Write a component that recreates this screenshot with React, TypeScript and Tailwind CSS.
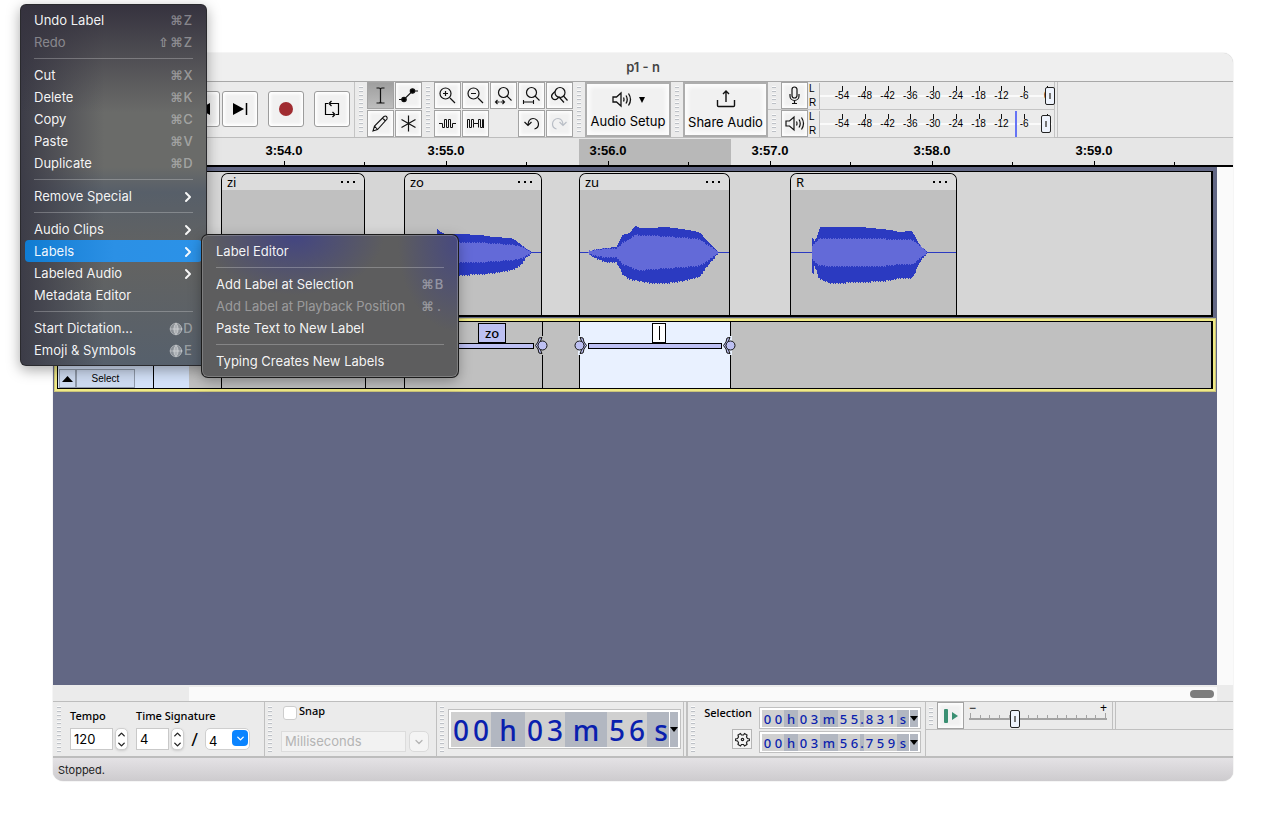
import React from "react";
import { ChevronDown, ChevronRight, ChevronUp, Globe } from "lucide-react";

interface MenuEntry {
  label?: string;
  shortcut?: string[];
  globe?: boolean;
  arrow?: boolean;
  disabled?: boolean;
  active?: boolean;
}

const EDIT_MENU: MenuEntry[] = [
  { label: "Undo Label", shortcut: ["⌘", "Z"] },
  { label: "Redo", shortcut: ["⇧", "⌘", "Z"], disabled: true },
  {},
  { label: "Cut", shortcut: ["⌘", "X"] },
  { label: "Delete", shortcut: ["⌘", "K"] },
  { label: "Copy", shortcut: ["⌘", "C"] },
  { label: "Paste", shortcut: ["⌘", "V"] },
  { label: "Duplicate", shortcut: ["⌘", "D"] },
  {},
  { label: "Remove Special", arrow: true },
  {},
  { label: "Audio Clips", arrow: true },
  { label: "Labels", arrow: true, active: true },
  { label: "Labeled Audio", arrow: true },
  { label: "Metadata Editor" },
  {},
  { label: "Start Dictation...", globe: true, shortcut: ["D"] },
  { label: "Emoji & Symbols", globe: true, shortcut: ["E"] },
];

const LABELS_MENU: MenuEntry[] = [
  { label: "Label Editor" },
  {},
  { label: "Add Label at Selection", shortcut: ["⌘", "B"] },
  { label: "Add Label at Playback Position", shortcut: ["⌘", "."], disabled: true },
  { label: "Paste Text to New Label" },
  {},
  { label: "Typing Creates New Labels" },
];

function MenuItems({ items }: { items: MenuEntry[] }) {
  return (
    <>
      {items.map((item, i) =>
        item.label ? (
          <button
            key={i}
            type="button"
            role="menuitem"
            disabled={item.disabled}
            className={`flex h-[22px] w-full items-center justify-between rounded-[4px] px-[9px] pt-[2px] text-left font-[Inter,sans-serif] text-[13px] ${
              item.disabled ? "text-white/40" : "text-white/95"
            } ${item.active ? "bg-gradient-to-r from-[#0f7cd2] via-[#2b90e5] to-[#2b92e8]" : ""}`}
          >
            <span className="whitespace-nowrap">{item.label}</span>
            {item.arrow && <ChevronRight className="-mr-[3px] h-[16px] w-[16px]" strokeWidth={3} />}
            {item.shortcut && (
              <span className="flex items-center font-medium text-white/40">
                {item.globe && (
                  <span className="flex h-[14px] w-[14px] items-center justify-center">
                    <Globe className="h-[14px] w-[14px] fill-white/30" strokeWidth={1.5} />
                  </span>
                )}
                {item.shortcut.map((key, k) => (
                  <span
                    key={k}
                    className={
                      key === "⌘" || key === "⇧"
                        ? "w-[13px] text-center font-['DejaVu_Sans',sans-serif] text-[13px] font-bold leading-4"
                        : "w-[10px] text-center"
                    }
                  >
                    {key}
                  </span>
                ))}
              </span>
            )}
          </button>
        ) : (
          <div key={i} role="separator" className="mx-[9px] flex h-[11px] items-center">
            <div className="h-px w-full bg-white/25" />
          </div>
        )
      )}
    </>
  );
}

/* ---------- waveforms ---------- */

// x, peak above, peak below, rms above, rms below
type Peak = [number, number, number, number, number];

const WAVE_ZO: Peak[] = [
  [32, 0, 0, 0, 0], [33, 23, 20, 8, 8], [36, 20, 20, 9, 9], [40, 18, 22, 9, 9], [55, 18, 22, 9, 9],
  [76, 17, 21, 9, 9], [88, 15, 20, 8, 8], [106, 14, 17, 7, 7], [112, 11, 15, 6, 6], [117, 7, 11, 5, 5],
  [121, 4, 5, 3, 3], [126, 1, 1, 0, 0],
];
const WAVE_ZU: Peak[] = [
  [9, 0, 0, 0, 0], [11, 1, 2, 1, 1], [19, 3, 6, 2, 3], [27, 4, 9, 3, 4], [37, 5, 9, 3, 4],
  [41, 13, 16, 6, 8], [43, 17, 21, 9, 11], [50, 19, 26, 12, 13], [56, 26, 27, 17, 16], [61, 24, 28, 16, 17],
  [72, 24, 30, 16, 16], [86, 25, 30, 15, 15], [102, 23, 28, 14, 14], [115, 21, 25, 13, 13],
  [121, 19, 23, 12, 12], [126, 13, 15, 8, 9], [133, 6, 7, 4, 4], [138, 1, 1, 0, 0],
];
const WAVE_R: Peak[] = [
  [22, 14, 20, 6, 6], [23, 13, 20, 7, 7], [24, 11, 13, 8, 8], [26, 14, 17, 10, 10], [28, 20, 24, 12, 12],
  [30, 25, 26, 13, 12], [40, 25, 30, 13, 13], [70, 25, 29, 13, 13], [90, 23, 28, 13, 13], [101, 22, 27, 12, 12],
  [108, 20, 25, 12, 11], [121, 21, 25, 12, 11], [124, 17, 21, 10, 10], [128, 9, 11, 7, 6],
  [132, 4, 5, 4, 3], [136, 1, 1, 0, 0],
];

function sample(points: Peak[], x: number, col: number) {
  const next = points.findIndex((p) => p[0] >= x);
  if (next <= 0) return points[0][col];
  const a = points[next - 1];
  const b = points[next];
  return a[col] + ((b[col] - a[col]) * (x - a[0])) / (b[0] - a[0]);
}

// one bar per pixel column, with a ragged edge
function columns(points: Peak[], up: number, down: number) {
  let d = "";
  for (let x = points[0][0]; x <= points[points.length - 1][0]; x++) {
    const ragged = (x * 7) % 5 < 2 ? 1 : 0;
    const top = Math.round(sample(points, x, up)) + (up === 3 ? ragged : 0);
    const bottom = Math.round(sample(points, x, down)) + ragged;
    d += `M${x - 1} ${62 - top}h1v${top + bottom + 1}h-1z`;
  }
  return d;
}

function Clip({ name, size, wave }: { name: string; size: string; wave?: Peak[] }) {
  return (
    <div className={`flex flex-col overflow-hidden rounded-t-[7px] border-x border-t border-black bg-[#c0c0c0] ${size}`}>
      <div className="flex h-4 items-center justify-between bg-[#dcdcdc] px-[5px] font-['Noto_Sans',sans-serif] text-[13px] leading-4 text-black">
        <span>{name}</span>
        <button type="button" aria-label="Clip options" className="mr-[4px] flex gap-[4px]">
          <i className="h-[2px] w-[2px] bg-black" />
          <i className="h-[2px] w-[2px] bg-black" />
          <i className="h-[2px] w-[2px] bg-black" />
        </button>
      </div>
      <svg className="h-[125px] w-full" shapeRendering="crispEdges" aria-hidden="true">
        {wave && (
          <>
            <rect x="0" y="62" width="100%" height="1" fill="#2b3ac1" />
            <path d={columns(wave, 1, 2)} fill="#2b3ac1" />
            <path d={columns(wave, 3, 4)} fill="#636ad8" />
          </>
        )}
      </svg>
    </div>
  );
}

function LabelHandle({ flip, bg }: { flip?: boolean; bg: string }) {
  return (
    <svg width="13" height="19" viewBox="0 0 13 19" className={`shrink-0 ${flip ? "-scale-x-100" : ""}`}>
      <rect x="4" width="3" height="19" fill={bg} />
      <path d="M6 1.500 9 2l1 4 2.500 3.500L10 13l-1 4-3 .5 1.500-3.500 2.500-4.500-2.500-4.500z" fill="#bdc0f2" stroke="#111" strokeWidth="1" />
      <circle cx="5.500" cy="9.500" r="4.500" fill="#bdc0f2" stroke="#111" strokeWidth="1" />
    </svg>
  );
}

function Label({ text, size, editing }: { text?: string; size: string; editing?: boolean }) {
  const bg = editing ? "#e9f1ff" : "#c0c0c0";
  return (
    <div className={`flex flex-col border-x border-black ${editing ? "bg-[#e9f1ff]" : ""} ${size}`}>
      {editing ? (
        <input
          aria-label="Label text"
          className="ml-[72px] mt-px h-5 w-[14px] border border-black bg-white bg-[linear-gradient(#000,#000)] bg-[length:1px_14px] bg-center bg-no-repeat outline-none"
        />
      ) : (
        <span className="ml-[73px] mt-px h-5 self-start border border-black bg-[#bdc0f2] px-[6px] font-['Noto_Sans',sans-serif] text-[13px] font-medium leading-[18px] text-black">
          {text}
        </span>
      )}
      <div className="-mx-[6px] -mt-[7px] flex items-center">
        <LabelHandle bg={bg} />
        <div className="mx-px h-[6px] flex-1 border border-black bg-[#bdc0f2]" />
        <LabelHandle flip bg={bg} />
      </div>
    </div>
  );
}

/* ---------- toolbars ---------- */

function Grip({ size = "h-[47px]" }: { size?: string }) {
  return (
    <div
      className={`w-[4px] shrink-0 bg-[repeating-linear-gradient(to_bottom,#fafafa_0px,#fafafa_1px,#bcc0c6_1px,#bcc0c6_2px,#ebebeb_2px,#ebebeb_4px)] ${size}`}
    />
  );
}

function ToolButton({ label, active, children }: { label: string; active?: boolean; children: React.ReactNode }) {
  return (
    <button
      type="button"
      aria-label={label}
      className={`flex h-[27px] w-[27px] items-center justify-center border border-[#a3a3a3] ${
        active
          ? "bg-gradient-to-b from-[#9f9f9f] to-[#bdbdbd]"
          : "bg-[#f1f1f1] shadow-[inset_0_0_3px_2px_#fdfdfd]"
      }`}
    >
      <svg width="21" height="21" viewBox="0 0 21 21" fill="none" stroke="#111" strokeWidth="1.200">
        {children}
      </svg>
    </button>
  );
}

function TransportButton({ label, children }: { label: string; children: React.ReactNode }) {
  return (
    <button
      type="button"
      aria-label={label}
      className="flex h-[36px] w-[36px] shrink-0 items-center justify-center rounded-[3px] border border-[#9c9c9c] bg-[#f1f1f1] shadow-[inset_0_0_3px_2px_#ffffff]"
    >
      <svg width="24" height="24" viewBox="0 0 24 24" fill="none" stroke="#000" strokeWidth="1.500">
        {children}
      </svg>
    </button>
  );
}

const SPEAKER = (
  <>
    <path d="M2 8h3.500L10 4v13l-4.500-4H2z" />
    <path d="M12.500 8.500q1 2 0 4M15 6.500q2.500 4 0 8M17.500 4.500q4 6 0 12" />
  </>
);

const METER_MARKS = ["-54", "-48", "-42", "-36", "-30", "-24", "-18", "-12", "-6", "0"];

const THUMB =
  "[&::-webkit-slider-thumb]:h-[18px] [&::-webkit-slider-thumb]:w-[10px] [&::-webkit-slider-thumb]:appearance-none [&::-webkit-slider-thumb]:rounded-[2px] [&::-webkit-slider-thumb]:border-[1px] [&::-webkit-slider-thumb]:border-[#222] [&::-webkit-slider-thumb]:bg-[linear-gradient(#777,#777)] [&::-webkit-slider-thumb]:bg-[length:2px_6px] [&::-webkit-slider-thumb]:bg-center [&::-webkit-slider-thumb]:bg-no-repeat [&::-webkit-slider-thumb]:bg-[#eef3fc]";

function Meter({ name, value, peak, icon }: { name: string; value: number; peak?: boolean; icon: React.ReactNode }) {
  return (
    <div className="flex h-[28px] items-center border-b border-[#c4c4c4]">
      <div className="ml-[4px] mr-[5px]">
        <Grip size="h-[19px]" />
      </div>
      <ToolButton label={name}>{icon}</ToolButton>
      <div className="ml-px mr-[2px] w-[8px] font-['Liberation_Sans',sans-serif] text-[10px] leading-[14px] text-black">
        <div>L</div>
        <div>R</div>
      </div>
      <div className="relative h-[26px] w-[233px] border-l border-[#bbb] bg-[linear-gradient(#ebebeb_0px,#ebebeb_12px,#fafafa_12px,#fafafa_14px,#ebebeb_14px)]">
        <div className="ml-[11px] flex w-[227px] justify-between">
          {METER_MARKS.map((mark) => (
            <div
              key={mark}
              className="w-[22px] shrink-0 bg-[linear-gradient(#111,#111)] bg-[length:1px_5px] bg-[position:11px_3px] bg-no-repeat text-center font-['Liberation_Sans',sans-serif] text-[10px] leading-[25px] text-black"
            >
              {mark}
            </div>
          ))}
        </div>
        {peak && <div className="absolute left-[195px] top-0 h-[26px] w-[2px] bg-[#6674f5]" />}
        <input
          type="range"
          aria-label={`${name} level`}
          defaultValue={value}
          className={`absolute inset-0 h-full w-[235px] appearance-none bg-transparent ${THUMB}`}
        />
      </div>
    </div>
  );
}

interface Cell {
  text: string;
  size: string;
}

const BIG_TIME: Cell[] = [
  { text: "00", size: "w-[40px]" },
  { text: "h", size: "w-[34px]" },
  { text: "03", size: "w-[40px]" },
  { text: "m", size: "w-[42px]" },
  { text: "56", size: "w-[40px]" },
  { text: "s", size: "w-[22px] pl-[6px]" },
];

function smallTime(seconds: string, millis: string): Cell[] {
  return [
    { text: "00", size: "w-[22px]" },
    { text: "h", size: "w-[14px]" },
    { text: "03", size: "w-[22px]" },
    { text: "m", size: "w-[18px]" },
    { text: seconds, size: "w-[22px]" },
    { text: ".", size: "w-[4px]" },
    { text: millis, size: "w-[33px]" },
    { text: "s", size: "w-[12px]" },
  ];
}

function TimeField({ label, cells, big }: { label: string; cells: Cell[]; big?: boolean }) {
  return (
    <div
      role="group"
      aria-label={label}
      className={`flex border-2 border-b-[1px] border-white bg-[#b2b7c1] font-['Noto_Sans',sans-serif] text-[#0a1fae] outline outline-1 outline-[#c0c0c0] ${
        big ? "h-[38px] text-[28px] leading-[37px]" : "h-5 text-[13px] leading-[18px]"
      }`}
    >
      {cells.map((cell, i) => (
        <div key={i} className={`flex ${cell.size} ${/\d/.test(cell.text) ? "bg-[#d0d0d0]" : ""}`}>
          {cell.text.split("").map((ch, k) => (
            <span key={k} className="flex flex-1 justify-center">
              {ch}
            </span>
          ))}
        </div>
      ))}
      <button type="button" aria-label={`${label} format`} className="flex w-[9px] items-center justify-center border-l border-white">
        <svg width="8" height="5" viewBox="0 0 8 5">
          <path d="M0 0h8L4 5z" fill="#000" />
        </svg>
      </button>
    </div>
  );
}

function Stepper() {
  return (
    <span className="ml-[2px] flex h-[22px] w-[13px] flex-col items-center justify-between rounded-[5px] border border-[#cfcfcf] bg-white text-[#222] shadow-sm">
      <button type="button" aria-label="Increase" className="flex h-[10px] items-center">
        <ChevronUp className="h-[11px] w-[11px]" strokeWidth={3} />
      </button>
      <span className="h-px w-full bg-[#d5d5d5]" />
      <button type="button" aria-label="Decrease" className="flex h-[10px] items-center">
        <ChevronDown className="h-[11px] w-[11px]" strokeWidth={3} />
      </button>
    </span>
  );
}

const LENS = <path d="m13 13 5 5M14 8.500a5.500 5.500 0 1 1-11 0 5.500 5.500 0 0 1 11 0z" />;

function Toolbar() {
  return (
    <div className="flex h-[56px] shrink-0 border-b border-[#bdbdbd] bg-[#ebebeb]">
      {/* Transport */}
      <div className="flex w-[302px] shrink-0 items-start justify-end border-r border-[#c4c4c4] pr-[4px] pt-[9px]">
        <TransportButton label="Skip to start">
          <path d="M5 6v12" />
          <path d="M20 6v12L9 12z" fill="#000" stroke="none" />
        </TransportButton>
        <div className="ml-[2px] mr-[10px]">
          <TransportButton label="Skip to end">
            <path d="M18.500 6v12" />
            <path d="M5 6v12l11-6z" fill="#000" stroke="none" />
          </TransportButton>
        </div>
        <TransportButton label="Record">
          <circle cx="12" cy="12" r="7" fill="#a02c31" stroke="none" />
        </TransportButton>
        <div className="ml-[10px]">
          <TransportButton label="Loop">
            <path d="M8 6.500H5.500v11H14M16 17.500h2.500v-11H10M11.500 4 9 6.500 11.500 9M12.500 15l2.500 2.500-2.500 2.500" strokeWidth="1.200" />
          </TransportButton>
        </div>
      </div>

      <div className="mx-[4px] self-center">
        <Grip />
      </div>

      {/* Tools */}
      <div className="grid grid-cols-2 gap-px self-start">
        <ToolButton label="Selection tool" active>
          <path d="M6.500 3H9q1.500 0 1.500 1.500v12Q10.500 18 9 18H6.500M14.500 3H12q-1.500 0-1.500 1.500M14.500 18H12q-1.500 0-1.500-1.500" />
        </ToolButton>
        <ToolButton label="Envelope tool">
          <path d="M1 14.500h5L14.500 6H20" />
          <circle cx="6" cy="14.500" r="2.200" fill="#000" />
          <circle cx="14.500" cy="6" r="2.200" fill="#000" />
        </ToolButton>
        <ToolButton label="Draw tool">
          <path d="m3 18 1.500-5L14 3.500q1.500-1 2.500 0t.5 2.500L7.500 16.500zM12.500 5l3 3M4.500 13l3 3.500" strokeWidth="1.100" />
        </ToolButton>
        <ToolButton label="Multi tool">
          <path d="M10.500 2.500v16M3.500 6.500l14 8M17.500 6.500l-14 8" />
        </ToolButton>
      </div>

      <div className="mx-[4px] self-center">
        <Grip />
      </div>

      {/* Zoom and edit */}
      <div className="grid grid-cols-5 gap-px self-start">
        <ToolButton label="Zoom in">
          {LENS}
          <path d="M8.500 6v5M6 8.500h5" />
        </ToolButton>
        <ToolButton label="Zoom out">
          {LENS}
          <path d="M6 8.500h5" />
        </ToolButton>
        <ToolButton label="Fit selection">
          <circle cx="10.500" cy="7.500" r="5" />
          <path d="m14 11 4.500 4.500M2.500 17h4M7.500 17h4M4.500 15l-2 2 2 2M9.500 15l2 2-2 2" strokeWidth="1.100" />
        </ToolButton>
        <ToolButton label="Fit project">
          <circle cx="10.500" cy="7.500" r="5" />
          <path d="m14 11 4.500 4.500M2.500 17h10M2.500 15v4M12.500 15v4" strokeWidth="1.100" />
        </ToolButton>
        <ToolButton label="Zoom toggle">
          <circle cx="11" cy="7.500" r="5" />
          <path d="m14.500 11 4 4.500M6 6.500 3.500 9a3.500 3.500 0 0 0 0 4.500 3.500 3.500 0 0 0 5 0l2-2M10.500 12.500l4.500 5" />
        </ToolButton>
        <ToolButton label="Trim audio">
          <path d="M2 10.500h3.500v4h2v-8h2v8h2v-8h2v8h2v-4H19" strokeWidth="1" />
        </ToolButton>
        <ToolButton label="Silence audio">
          <path d="M2.500 15V6.500h2v8h2v-8h2v4h5v-4h2v8h2v-8h1V15M13.500 10.500v4M8.500 10.500v4" strokeWidth="1" />
        </ToolButton>
        <span />
        <ToolButton label="Undo">
          <path d="M3.500 9l3.500 3.500L10.500 9M7 12c0-4 2-6.500 5-6.500s5.500 2.500 5.500 5.500c0 2.500-2 4.500-4 5" />
        </ToolButton>
        <ToolButton label="Redo">
          <path d="M17.500 9 14 12.500 10.500 9M14 12c0-4-2-6.500-5-6.500S3.500 8 3.500 11c0 2.500 2 4.500 4 5" stroke="#b9bec6" />
        </ToolButton>
      </div>

      <div className="mx-[4px] self-center">
        <Grip />
      </div>

      <button
        type="button"
        className="flex h-[55px] w-[86px] shrink-0 flex-col items-center border-2 border-[#adadad] bg-[#f1f1f1] pt-[5px] font-[Inter,sans-serif] text-[13px] leading-[20px] text-black shadow-[inset_0_0_4px_3px_#fdfdfd]"
      >
        <span className="flex items-center gap-[6px]">
          <svg width="22" height="22" viewBox="0 0 22 22" fill="none" stroke="#111" strokeWidth="1.300">
            {SPEAKER}
          </svg>
          <svg width="6" height="6" viewBox="0 0 6 6">
            <path d="M0 0h6L3 6z" fill="#000" />
          </svg>
        </span>
        <span className="whitespace-nowrap">Audio Setup</span>
      </button>

      <div className="mx-[4px] self-center">
        <Grip />
      </div>

      <button
        type="button"
        className="flex h-[55px] w-[85px] shrink-0 flex-col items-center border-2 border-[#adadad] bg-[#f1f1f1] pt-[5px] font-[Inter,sans-serif] text-[13px] leading-[20px] text-black shadow-[inset_0_0_4px_3px_#fdfdfd]"
      >
        <svg width="22" height="22" viewBox="0 0 22 22" fill="none" stroke="#111" strokeWidth="1.400">
          <path d="M2.500 11v5.500q0 1 1 1h15q1 0 1-1V11M11 13V2M8 5l3-3 3 3" />
        </svg>
        <span className="mt-px whitespace-nowrap">Share Audio</span>
      </button>

      {/* Meters */}
      <div className="w-[287px] shrink-0 border-r border-[#c4c4c4]">
        <Meter
          name="Recording"
          value={100}
          icon={<path d="M8 4.500a2.500 2.500 0 0 1 5 0v6a2.500 2.500 0 0 1-5 0zM6 9v2a4.500 4.500 0 0 0 9 0V9M10.500 15.500V18M8 18.500h5" />}
        />
        <Meter name="Playback" value={98} peak icon={SPEAKER} />
      </div>
      <div className="w-[3px] shrink-0 border-r border-[#c4c4c4]" />
    </div>
  );
}

function Ruler() {
  const seconds = ["3:54.0", "3:55.0", "3:56.0", "3:57.0", "3:58.0", "3:59.0"];
  return (
    <div className="relative flex h-[29px] shrink-0 overflow-hidden border-b-2 border-black bg-[#e6e6e6] pl-[150px]">
      <div className="absolute bottom-0 left-[526px] top-px w-[152px] bg-[#b8b8b8]" />
      {seconds.map((s) => (
        <div key={s} className="relative flex w-[162px] shrink-0 flex-col items-center justify-between">
          <span className="mt-[2px] font-['Liberation_Sans',sans-serif] text-[13px] font-bold leading-[21px] text-black">{s}</span>
          <div className="flex w-full items-end">
            <div className="flex-1" />
            <div className="h-[4px] w-px bg-black" />
            <div className="flex flex-1 items-end justify-end">
              <div className="h-[3px] w-px bg-black" />
            </div>
          </div>
        </div>
      ))}
    </div>
  );
}

function Tracks() {
  return (
    <div className="min-w-0 flex-1 bg-[#626784] pt-[4px]">
      {/* Audio track */}
      <div className="mx-[4px] flex h-[146px] border-b-2 border-l border-r-2 border-t border-black bg-[#d6d6d6]">
        <div className="w-[131px] shrink-0 bg-[#d3e1f8]" />
        <div className="flex pt-px">
          <Clip name="zi" size="ml-[32px] w-[144px]" />
          <Clip name="zo" size="ml-[39px] w-[138px]" wave={WAVE_ZO} />
          <Clip name="zu" size="ml-[37px] w-[151px]" wave={WAVE_ZU} />
          <Clip name="R" size="ml-[60px] w-[167px]" wave={WAVE_R} />
        </div>
      </div>

      {/* Label track */}
      <div className="mx-px mt-px border-[3px] border-[#f0ea86] outline outline-1 -outline-offset-1 outline-[#c9c37a]">
        <div className="flex h-[68px] border border-r-2 border-black bg-[#c0c0c0]">
          <div className="flex w-[131px] shrink-0 bg-[#d3e1f8]">
            <div className="flex flex-1 items-end border-r border-black pl-px">
              <button
                type="button"
                aria-label="Collapse track"
                className="flex h-[19px] w-[17px] items-center justify-center border border-[#8e98a8] bg-[#ccd9ef]"
              >
                <svg width="11" height="6" viewBox="0 0 11 6">
                  <path d="M5.500 0 11 6H0z" fill="#000" />
                </svg>
              </button>
              <button
                type="button"
                className="h-[19px] w-[59px] border border-[#8e98a8] bg-[#ccd9ef] font-['Liberation_Sans',sans-serif] text-[10px] leading-4 text-black"
              >
                Select
              </button>
            </div>
            <div className="w-[35px]" />
          </div>
          <div className="flex">
            <Label size="ml-[32px] w-[145px]" />
            <Label text="zo" size="ml-[38px] w-[139px]" />
            <Label size="ml-[36px] w-[152px]" editing />
          </div>
        </div>
      </div>
    </div>
  );
}

function BottomBar() {
  return (
    <div className="flex h-[57px] shrink-0 border-b-2 border-t border-[#bdbdbd] bg-[#ebebeb] font-['Noto_Sans',sans-serif] text-[11px] font-medium text-black">
      {/* Time signature */}
      <div className="flex w-[212px] shrink-0 border-r border-[#c0c0c0] pl-[4px] pt-[4px]">
        <Grip />
        <div className="ml-[9px] w-[66px]">
          <label htmlFor="tempo" className="block h-[22px] leading-[20px]">
            Tempo
          </label>
          <div className="flex">
            <input
              id="tempo"
              defaultValue="120"
              className="h-[22px] w-[43px] border border-[#c9c9c9] bg-white px-[3px] font-[Inter,sans-serif] text-[13px] font-normal"
            />
            <Stepper />
          </div>
        </div>
        <div>
          <label htmlFor="upper" className="block h-[22px] whitespace-nowrap leading-[20px]">
            Time Signature
          </label>
          <div className="flex">
            <input
              id="upper"
              defaultValue="4"
              className="h-[22px] w-[33px] border border-[#c9c9c9] bg-white px-[3px] font-[Inter,sans-serif] text-[13px] font-normal"
            />
            <Stepper />
            <span className="w-[21px] text-center text-[18px] font-normal leading-[22px]">/</span>
            <span className="relative">
              <select
                aria-label="Lower time signature"
                className="h-[22px] w-[45px] appearance-none rounded-[5px] border border-[#cfcfcf] bg-white px-[3px] pt-[3px] font-[Inter,sans-serif] text-[13px] font-normal leading-[16px]"
              >
                <option>4</option>
              </select>
              <span className="pointer-events-none absolute right-[2px] top-[2px] flex h-4 w-4 items-center justify-center rounded-[4px] bg-[#0a84ff] text-white">
                <ChevronDown className="h-[11px] w-[11px]" strokeWidth={3} />
              </span>
            </span>
          </div>
        </div>
      </div>

      {/* Snapping */}
      <div className="flex w-[172px] shrink-0 border-r border-[#c0c0c0] pl-[3px] pt-[4px]">
        <Grip />
        <div className="ml-[9px]">
          <label className="flex h-[12px] items-start gap-[2px] pl-[2px] leading-[10px]">
            <input type="checkbox" className="h-[14px] w-[14px] shrink-0 appearance-none rounded-[3px] border border-[#cdcdcd] bg-white" />
            Snap
          </label>
          <div className="mt-[13px] flex items-center">
            <select
              disabled
              aria-label="Snap to"
              className="h-[21px] w-[125px] appearance-none border border-[#dcdcdc] bg-[#f2f2f2] px-[3px] font-[Inter,sans-serif] text-[13px] font-normal text-[#b4b4b4] opacity-100"
            >
              <option>Milliseconds</option>
            </select>
            <button
              type="button"
              disabled
              aria-label="Snap options"
              className="ml-[3px] flex h-[21px] w-[20px] items-center justify-center rounded-[5px] border border-[#dadada] bg-[#f4f4f4] text-[#b4b4b4]"
            >
              <ChevronDown className="h-[12px] w-[12px]" strokeWidth={2.5} />
            </button>
          </div>
        </div>
      </div>

      {/* Time */}
      <div className="flex w-[247px] shrink-0 border-r border-[#c0c0c0] pl-[3px] pt-[4px]">
        <Grip />
        <div className="ml-[5px] pt-[4px]">
          <TimeField label="Audio position" cells={BIG_TIME} big />
        </div>
      </div>
      <div className="w-[4px] shrink-0 border-r-2 border-[#c0c0c0]" />

      {/* Selection */}
      <div className="flex w-[238px] shrink-0 border-r border-[#c0c0c0] pl-[3px] pt-[4px]">
        <Grip />
        <div className="ml-[9px] flex w-[48px] flex-col items-end">
          <span className="h-[23px] leading-[13px]">Selection</span>
          <button
            type="button"
            aria-label="Selection settings"
            className="flex h-5 w-5 items-center justify-center border border-[#b5b5b5] bg-[#f4f4f4]"
          >
            <svg width="15" height="15" viewBox="0 0 15 15" fill="none" stroke="#222" strokeWidth="1.200">
              <path d="M5.500 1.500 6.500 3h2l1-1.500 2.500 1.500-.5 2 1 1.500 2 .5v1.500l-2 .5-1 1.500.5 2-2.500 1.500-1-1.500h-2l-1 1.500L3 12.500l.5-2-1-1.500-2-.5V7l2-.5 1-1.500-.5-2z" />
              <circle cx="7.500" cy="7.500" r="1.200" />
            </svg>
          </button>
        </div>
        <div className="ml-[8px] flex flex-col gap-[4px] pt-[2px]">
          <TimeField label="Selection start" cells={smallTime("55", "831")} />
          <TimeField label="Selection end" cells={smallTime("56", "759")} />
        </div>
      </div>

      {/* Play at speed */}
      <div className="min-w-0 flex-1">
        <div className="flex h-[28px] border-b border-[#c0c0c0]">
          <div className="ml-[3px] mr-[4px] pt-[5px]">
            <Grip size="h-[19px]" />
          </div>
          <button
            type="button"
            aria-label="Play at speed"
            className="flex h-[27px] w-[27px] shrink-0 items-center justify-center border border-[#a3a3a3] bg-[#f1f1f1] shadow-[inset_0_0_3px_2px_#fdfdfd]"
          >
            <svg width="16" height="14" viewBox="0 0 16 14" fill="#3a8f72">
              <rect x="1" width="4" height="14" rx="1" />
              <path d="M9 3v8l6-4z" />
            </svg>
          </button>
          <div className="relative ml-[5px] w-[140px] shrink-0">
            <div className="flex justify-between pr-[2px] font-['Liberation_Sans',sans-serif] text-[12px] leading-[13px]">
              <span>−</span>
              <span>+</span>
            </div>
            <div className="mr-[2px] flex h-[5px] items-end justify-between border-b-2 border-[#a3a3a3] px-px">
              {Array.from({ length: 15 }, (_, i) => (
                <i key={i} className={`w-px bg-[#a3a3a3] ${i === 0 || i === 14 ? "h-[5px]" : "h-[3px]"}`} />
              ))}
            </div>
            <input
              type="range"
              aria-label="Playback speed"
              defaultValue={32}
              className={`absolute left-0 top-[8px] h-[18px] w-[139px] appearance-none bg-transparent ${THUMB}`}
            />
          </div>
          <div className="w-[4px] shrink-0 border-r border-[#c0c0c0]" />
          <div className="w-[3px] shrink-0 border-r border-[#c0c0c0]" />
        </div>
      </div>
    </div>
  );
}

export default function App() {
  return (
    <main className="relative flex min-h-screen flex-col bg-white pb-[32px] pl-[53px] pr-[35px] pt-[53px]">
      <div className="flex flex-1 flex-col overflow-hidden rounded-[10px] bg-[#ebebeb] shadow-[0_0_1px_#999]">
        <h1 className="h-[29px] shrink-0 border-b border-[#a8a8a8] bg-[#efefef] text-center font-[Inter,sans-serif] text-[13px] font-semibold leading-[28px] text-[#444]">
          p1 - n
        </h1>
        <Toolbar />
        <Ruler />
        <div className="flex flex-1">
          <Tracks />
          <div className="w-4 shrink-0 bg-[#fafafa]" />
        </div>
        <div className="flex h-4 shrink-0 pr-4 pt-[2px]">
          <div className="w-[136px] shrink-0" />
          <div className="flex flex-1 items-center justify-end bg-[#fafafa] pr-[3px]">
            <div className="h-[8px] w-[24px] rounded-full bg-[#7d7d7d]" />
          </div>
        </div>
        <BottomBar />
        <footer className="h-[23px] shrink-0 bg-gradient-to-b from-[#e4e2e5] to-[#cdcbce] px-[5px] font-[Inter,sans-serif] text-[11px] leading-[24px] text-[#222]">
          Stopped.
        </footer>
      </div>

      {/* Edit menu */}
      <div
        role="menu"
        aria-label="Edit"
        className="absolute left-[20px] top-[4px] w-[187px] rounded-[6px] bg-[#5c5d60] bg-[linear-gradient(to_bottom,#35323e_0%,#35323e99_12%,transparent_30%),linear-gradient(to_right,#3c3c47_0%,transparent_45%),linear-gradient(to_bottom,#6a6b69_45%,#575f69_52%,#636361_70%,#56606c_100%)] p-[5px] shadow-[0_4px_14px_rgba(0,0,0,0.35),inset_0_0_0_1px_#2a2a2e]"
      >
        <MenuItems items={EDIT_MENU} />
      </div>
      <div
        role="menu"
        aria-label="Labels"
        className="absolute left-[202px] top-[235px] w-[256px] rounded-[6px] bg-[#5d5d5e] bg-[radial-gradient(ellipse_90px_60px_at_36%_0%,#434582_0%,transparent_100%),radial-gradient(ellipse_60px_90px_at_100%_5%,#47497f_0%,transparent_100%)] p-[5px] shadow-[0_0_0_1px_#1c1c1c,0_4px_14px_rgba(0,0,0,0.35),inset_0_0_0_1px_rgba(255,255,255,0.2)]"
      >
        <MenuItems items={LABELS_MENU} />
      </div>
    </main>
  );
}
